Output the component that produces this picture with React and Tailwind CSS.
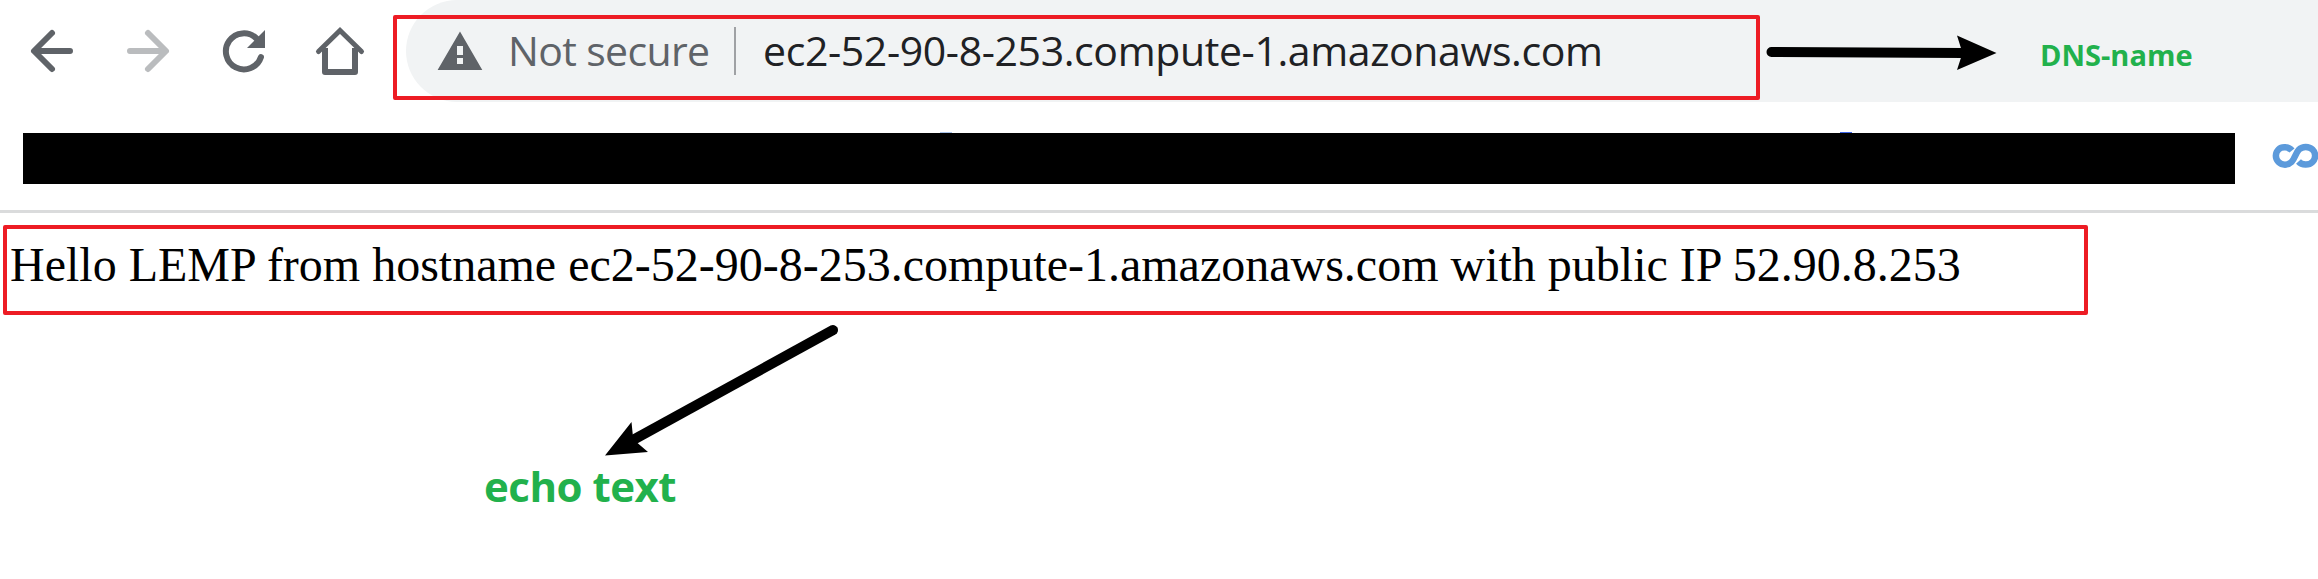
function Toolbar() {
  return (
    <header className="flex h-[102px] bg-white">
      <nav className="flex w-[406px] shrink-0 items-center text-[#5f6368]">
        <svg viewBox="0 0 406 102" className="h-[102px] w-[406px]" fill="none" stroke="currentColor" strokeWidth="6" strokeLinecap="round">
          <path d="M70 51H35M52 33L34 51L52 69" strokeLinejoin="round" />
          <path d="M130 51H165M148 33L166 51L148 69" strokeLinejoin="round" stroke="#babcbe" />
          <path d="M256.5 38.5A18 18 0 1 0 261 57" />
          <path d="M265 30V48H247Z" fill="currentColor" stroke="none" />
          <path d="M318.500 51.500L340 30.500L361.500 51.500" strokeWidth="5" />
          <path d="M325 48V72H355V48" strokeLinecap="butt" strokeLinejoin="round" />
        </svg>
      </nav>
      <div className="flex flex-1 items-center rounded-l-full bg-[#f1f3f4] font-['Open_Sans',sans-serif] text-[41px] leading-[56px] whitespace-nowrap">
        <svg viewBox="0 0 46 40" className="ml-[31px] h-[40px] w-[46px] shrink-0" fill="#5f6368">
          <path fillRule="evenodd" d="M23 0.500L45.300 39H0.600ZM20 15V24H26V15ZM20 27V33H26V27Z" />
        </svg>
        <span className="ml-[25px] w-[202px] shrink-0 pb-0.5 tracking-[-0.65px] text-[#5f6368]">Not secure</span>
        <span className="ml-[24px] h-[48px] w-[2px] shrink-0 bg-[#9fa1a4]" />
        <span className="ml-[27px] pb-0.5 tracking-[-0.38px] text-[#202124]">ec2-52-90-8-253.compute-1.amazonaws.com</span>
      </div>
    </header>
  );
}

function BookmarksBar() {
  return (
    <div className="flex h-[111px] items-start border-b-[3px] border-[#dadbdc] pt-[30px] pl-[23px]">
      <div className="w-[2212px] shrink-0">
        <div className="flex h-px">
          <span className="ml-[917px] w-[12px] bg-[#a9c3ea]" />
          <span className="ml-[888px] w-[12px] bg-[#3c64e6]" />
        </div>
        <div className="h-[51px] bg-black" />
      </div>
      <svg viewBox="0 0 46 26" className="mt-[11px] ml-[37px] h-[26px] w-[46px] shrink-0" fill="none" stroke="#5c9adb" strokeWidth="6.500">
        <path d="M20 7.500C17 3.800 10 3 6.500 6.500C3 10 3 15.500 6.500 19C10 22.500 16 22.500 19.500 19C23 15.500 23.500 10 27 6.500C30.500 3 37 3 40.500 6.500C44 10 44 15.500 40.500 19C37 22.500 30 22.500 26.500 18.500" />
      </svg>
    </div>
  );
}

function Annotations() {
  return (
    <>
      <div className="absolute top-[15px] left-[393px] h-[85px] w-[1367px] rounded-[2px] border-4 border-[#ed1c24]" />
      <div className="absolute top-[225px] left-[3px] h-[90px] w-[2085px] rounded-[2px] border-4 border-[#ed1c24]" />
      <svg viewBox="0 0 2318 579" className="absolute top-0 left-0 h-[579px] w-[2318px]">
        <path d="M1771.500 52L1964 53" stroke="#000" strokeWidth="10" strokeLinecap="round" />
        <path d="M1996.500 53L1957 35.500L1962.500 53L1957 70Z" />
        <path d="M833 330L633 440" stroke="#000" strokeWidth="10" strokeLinecap="round" />
        <path d="M605 455.500L631.500 422L633 437L637.500 443L648 452Z" />
      </svg>
      <span className="absolute top-[35px] left-[2040px] font-['Open_Sans',sans-serif] text-[29px] leading-[40px] font-bold whitespace-nowrap text-[#22b14c]">DNS-name</span>
      <span className="absolute top-[458px] left-[484px] font-['Open_Sans',sans-serif] text-[42px] leading-[56px] font-bold tracking-[-0.5px] whitespace-nowrap text-[#22b14c]">echo text</span>
    </>
  );
}

export default function App() {
  return (
    <div className="relative h-[579px] w-[2318px] overflow-hidden bg-white">
      <Toolbar />
      <BookmarksBar />
      <main className="pt-[24px] pl-[10px]">
        <p className="font-['Liberation_Serif',serif] text-[48px] leading-[56px] whitespace-nowrap text-black">
          Hello LEMP from hostname ec2-52-90-8-253.compute-1.amazonaws.com with public IP 52.90.8.253
        </p>
      </main>
      <Annotations />
    </div>
  );
}
